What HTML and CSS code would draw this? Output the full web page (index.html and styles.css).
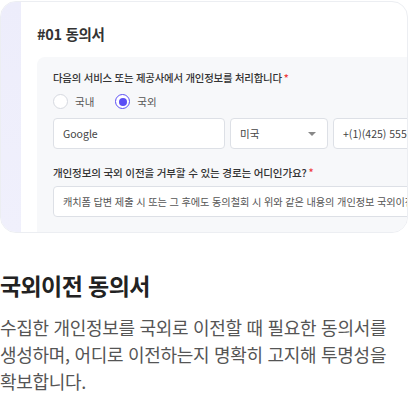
FILE: index.html
```html
<!DOCTYPE html>
<html lang="ko">
<head>
<meta charset="utf-8">
<link rel="stylesheet" href="styles.css">
</head>
<body>
<div class="card">
  <div class="strip"></div>
  <div class="main">
    <div class="title">#01 동의서</div>
    <div class="box">
      <div class="label">다음의 서비스 또는 제공사에서 개인정보를 처리합니다<span class="req">*</span></div>
      <div class="radios">
        <label class="radio"><span class="circle"></span>국내</label>
        <label class="radio on"><span class="circle"></span>국외</label>
      </div>
      <div class="row">
        <div class="field f1">Google</div>
        <div class="field f2">미국<span class="caret"></span></div>
        <div class="field f3">+(1)(425) 555-0100</div>
      </div>
      <div class="label l2">개인정보의 국외 이전을 거부할 수 있는 경로는 어디인가요?<span class="req">*</span></div>
      <div class="field wide">캐치폼 답변 제출 시 또는 그 후에도 동의철회 시 위와 같은 내용의 개인정보 국외이전을 거부할 수 있습니다.</div>
    </div>
  </div>
</div>
<h2 class="heading">국외이전 동의서</h2>
<p class="desc">수집한 개인정보를 국외로 이전할 때 필요한 동의서를 생성하며, 어디로 이전하는지 명확히 고지해 투명성을 확보합니다.</p>
</body>
</html>
```
FILE: styles.css
```css
html, body {
  margin: 0;
  padding: 0;
  background: #ffffff;
  font-family: "Noto Sans CJK KR", "Noto Sans", sans-serif;
  overflow: hidden;
}
.card {
  display: flex;
  width: 408px;
  height: 232px;
  margin-top: 1px;
  border: 1px solid #eceef2;
  border-radius: 16px;
  box-sizing: border-box;
  overflow: hidden;
  background: #fff;
}
.strip {
  width: 20px;
  flex: none;
  background: linear-gradient(180deg, #ededfb 0%, #f0f0fc 100%);
}
.main {
  flex: 1;
  min-width: 0;
  display: flex;
  flex-direction: column;
  padding-left: 16px;
  overflow: hidden;
}
.title {
  font-size: 14.5px;
  font-weight: 700;
  color: #333;
  height: 55px;
  line-height: 20px;
  padding-top: 22px;
  box-sizing: border-box;
  letter-spacing: -0.3px;
}
.box {
  flex: 1;
  background: #f7f8fa;
  border-radius: 8px 0 0 0;
  padding: 13px 0 0 16px;
  overflow: hidden;
  white-space: nowrap;
}
.label {
  font-size: 10.4px;
  line-height: 16px;
  color: #333;
  font-weight: 500;
  letter-spacing: -0.2px;
}
.req {
  color: #f03e3e;
  margin-left: 2px;
}
.radios {
  display: flex;
  gap: 21px;
  margin-top: 7px;
  height: 17px;
}
.radio {
  display: flex;
  align-items: center;
  gap: 7px;
  font-size: 10.5px;
  color: #555;
}
.circle {
  width: 15px;
  height: 15px;
  border: 1px solid #d6d9e0;
  border-radius: 50%;
  background: #fff;
  box-sizing: border-box;
  display: flex;
  align-items: center;
  justify-content: center;
}
.radio.on .circle {
  border-color: #5b4ef5;
}
.radio.on .circle::after {
  content: "";
  width: 8px;
  height: 8px;
  border-radius: 50%;
  background: #5b4ef5;
}
.row {
  display: flex;
  gap: 5px;
  margin-top: 8px;
}
.field {
  height: 31px;
  border: 1px solid #dde0e6;
  border-radius: 4px;
  background: #fff;
  box-sizing: border-box;
  display: flex;
  align-items: center;
  padding-left: 9px;
  font-size: 10.5px;
  color: #444;
  flex: none;
  overflow: hidden;
}
.f1 { width: 172px; }
.f2 { width: 98px; justify-content: space-between; padding-right: 11px; }
.f3 { width: 120px; }
.caret {
  width: 0;
  height: 0;
  border-left: 4px solid transparent;
  border-right: 4px solid transparent;
  border-top: 4px solid #888;
}
.l2 {
  margin-top: 16px;
  font-size: 10.6px;
}
.wide {
  margin-top: 5px;
  width: 400px;
  font-size: 10.2px;
  color: #555;
  letter-spacing: -0.1px;
}
.heading {
  margin: 37px 0 0 0;
  font-size: 23px;
  line-height: 30px;
  font-weight: 700;
  color: #222;
  letter-spacing: -0.6px;
}
.desc {
  margin: 14px 0 0 0;
  font-size: 18px;
  line-height: 27px;
  color: #555;
  width: 400px;
  letter-spacing: -0.3px;
}
```
